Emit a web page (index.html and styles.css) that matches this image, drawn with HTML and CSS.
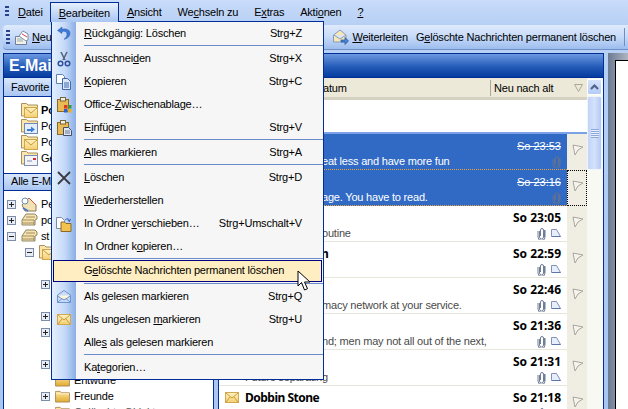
FILE: index.html
```html
<!DOCTYPE html>
<html lang="de">
<head>
<meta charset="utf-8">
<title>Outlook</title>
<link rel="stylesheet" href="styles.css">
</head>
<body>
<svg class="defs" width="0" height="0">
  <defs>
    <linearGradient id="fg" x1="0" y1="0" x2="0" y2="1"><stop offset="0" stop-color="#ffe9a8"/><stop offset="1" stop-color="#e2a92c"/></linearGradient>
    <linearGradient id="eg" x1="0" y1="0" x2="0" y2="1"><stop offset="0" stop-color="#fff3c4"/><stop offset="1" stop-color="#f5cf70"/></linearGradient>
    <symbol id="folder" viewBox="0 0 16 14"><path d="M.5 3V1.500h5l1.500 1.500h8.500v10H.5z" fill="url(#fg)" stroke="#a88f5c"/><path d="M1 4h14" stroke="#fff2c4"/></symbol>
    <symbol id="env" viewBox="0 0 14 11"><rect x=".5" y=".5" width="13" height="10" fill="url(#eg)" stroke="#d2a94e"/><path d="M1 1l6 5 6-5M1 10l4-5M13 10l-4-5" fill="none" stroke="#c89a3c"/></symbol>
    <symbol id="folderenv" viewBox="0 0 17 16"><path d="M.5 3V1.500h5l1.500 1.500h9.500v11H.5z" fill="#fbe6ae" stroke="#a88f5c"/><rect x="3.500" y="5.500" width="13" height="10" fill="url(#eg)" stroke="#cfa64c"/><path d="M4 6l6 5 6-5" fill="none" stroke="#c89a3c"/></symbol>
    <symbol id="clip" viewBox="0 0 9 13"><path d="M2.500 4v6a2 2 0 0 0 4 0V3a1.500 1.500 0 0 0-3 0v6M7.500 3v7M1 4v6a3.500 3.500 0 0 0 7 0V3" fill="none" stroke="currentColor"/></symbol>
    <symbol id="note" viewBox="0 0 10 8"><path d="M.5 7.500V.5h5l4 7z" fill="#e8eefb" stroke="#7f92b8"/><path d="M1 7.500h8.500" stroke="#5d74a8"/></symbol>
    <symbol id="flag" viewBox="0 0 12 14"><path d="M3 12L1 2l10 2-5 3z" fill="#f6f4ec" stroke="#a8a8a0"/></symbol>
    <symbol id="drive" viewBox="0 0 17 16"><path d="M1 8l4-6h9l2 2v3l-2 1v5H1z" fill="#f5e2b0" stroke="#8f8664"/><path d="M1 8h12v5M1 11h12M5 5h9" fill="none" stroke="#a08f5c"/></symbol>
    <symbol id="plus" viewBox="0 0 9 9"><rect x=".5" y=".5" width="8" height="8" fill="#e8ecf5" stroke="#7f8ba8"/><path d="M2 4.500h5M4.500 2v5" stroke="#222"/></symbol>
    <symbol id="minus" viewBox="0 0 9 9"><rect x=".5" y=".5" width="8" height="8" fill="#e8ecf5" stroke="#7f8ba8"/><path d="M2 4.500h5" stroke="#222"/></symbol>
    <symbol id="clipb" viewBox="0 0 16 16"><rect x="1.500" y="2.500" width="11" height="12" fill="#e9bb52" stroke="#8a6a2a"/><rect x="4.500" y=".5" width="5" height="3.500" fill="#f3efe2" stroke="#77653b"/></symbol>
  </defs>
</svg>

<div class="app">
  <nav class="menubar">
    <span class="grip"></span>
    <span class="mi"><u>D</u>atei</span>
    <span class="mi mi-open"><u>B</u>earbeiten</span>
    <span class="mi"><u>A</u>nsicht</span>
    <span class="mi">We<u>c</u>hseln zu</span>
    <span class="mi">E<u>x</u>tras</span>
    <span class="mi">Akti<u>o</u>nen</span>
    <span class="mi"><u>?</u></span>
  </nav>

  <div class="toolbar">
    <span class="grip grip-tb"></span>
    <svg class="tb-ico" width="17" height="17" viewBox="0 0 17 17"><path d="M1.500 7.500h11v8h-11z" fill="#f4f2e8" stroke="#6d7f9d"/><path d="M5 7l4-5 5 3v6l-2 1z" fill="#fff" stroke="#7b8cab"/><path d="M8 5l5 3" stroke="#d44"/><path d="M3 10h6M3 12h6" stroke="#9aa"/></svg>
    <span class="tb-t tb-neu"><u>N</u>eu</span>
    <span class="tb-spacer"></span>
    <span class="tb-frag"></span>
    <svg class="tb-ico" width="16" height="16" viewBox="0 0 16 16"><path d="M.5 6L7 1l6 5v7H.5z" fill="#f6e7b4" stroke="#8a9bb8"/><path d="M1 6l6 4 6-4" fill="#dbe7f8" stroke="#8a9bb8"/><path d="M8 11h4V8.500l3.500 3.500-3.500 3.500V13H8z" fill="#4a86d8" stroke="#24509a" stroke-width=".7"/></svg>
    <span class="tb-t tb-wl"><u>W</u>eiterleiten</span>
    <span class="tb-t tb-del">G<u>e</u>löschte Nachrichten permanent löschen</span>
    <span class="tb-sep"></span>
  </div>

  <div class="panes">
    <aside class="nav">
      <h2 class="pane-title">E-Mai</h2>
      <div class="nav-head">Favorite</div>
      <ul class="fav">
        <li class="fav-row fav-b"><svg class="fav-ico"><use href="#folderenv"/></svg>Po</li>
        <li class="fav-row"><svg class="fav-ico" viewBox="0 0 17 16"><path d="M.5 3V1.500h5l1.500 1.500h9.500v11H.5z" fill="#fbe6ae" stroke="#a88f5c"/><rect x="3.500" y="5.500" width="13" height="10" fill="#e4edfb" stroke="#6e8ab8"/><path d="M6 11h4V8.500l4 3-4 3V13H6z" fill="#3d7cd4"/></svg>Po</li>
        <li class="fav-row"><svg class="fav-ico"><use href="#folderenv"/></svg>Po</li>
        <li class="fav-row"><svg class="fav-ico" viewBox="0 0 17 16"><path d="M.5 3V1.500h5l1.500 1.500h9.500v11H.5z" fill="#fbe6ae" stroke="#a88f5c"/><rect x="3.500" y="5.500" width="13" height="10" fill="#f4f4f8" stroke="#7d8db0"/><path d="M6 11h5" stroke="#7d8db0"/><path d="M12 8h3v2h-3z" fill="#d03030"/></svg>Ge</li>
      </ul>
      <div class="nav-head nav-head-all">Alle E-Ma</div>
      <ul class="tree">
        <li class="t t0"><svg class="box"><use href="#plus"/></svg><svg class="t-ico" viewBox="0 0 17 16"><path d="M1 9l7-7 7 7v6H4z" fill="#f3e2b6" stroke="#8a7a55"/><path d="M8 2l7 7" stroke="#d05030"/><circle cx="4" cy="5" r="3" fill="#fff" stroke="#7088b8"/><path d="M2 12l5 3" stroke="#4a78c8" stroke-width="2"/></svg>Pe</li>
        <li class="t t0"><svg class="box"><use href="#plus"/></svg><svg class="t-ico"><use href="#drive"/></svg>po</li>
        <li class="t t0"><svg class="box"><use href="#minus"/></svg><svg class="t-ico"><use href="#drive"/></svg>st</li>
        <li class="t t1"><svg class="box"><use href="#minus"/></svg><svg class="t-ico"><use href="#folderenv"/></svg></li>
        <li class="t t2"></li>
        <li class="t t2"><svg class="box"><use href="#plus"/></svg></li>
        <li class="t t2"></li>
        <li class="t t2"><svg class="box"><use href="#plus"/></svg></li>
        <li class="t t2"><svg class="box"><use href="#plus"/></svg></li>
        <li class="t t2"></li>
        <li class="t t2"><svg class="box"><use href="#plus"/></svg></li>
        <li class="t t2"><span class="box-none"></span><svg class="t-fold"><use href="#folder"/></svg>Entwürfe</li>
        <li class="t t2"><svg class="box"><use href="#plus"/></svg><svg class="t-fold"><use href="#folder"/></svg>Freunde</li>
        <li class="t t2 t-muted"><span class="box-none"></span><svg class="t-fold"><use href="#folder"/></svg>Gelöschte Objekte</li>
      </ul>
    </aside>

    <main class="list-pane">
      <div class="list-col">
        <div class="colhead">
          <span class="ch-sort">atum</span>
          <span class="ch-order">Neu nach alt</span>
          <svg class="ch-tri" width="9" height="8" viewBox="0 0 9 8"><path d="M.5.500h8L4.500 7.500z" fill="#ece9d8" stroke="#aca899"/></svg>
        </div>
        <div class="rows">
          <div class="spacer"></div>
          <div class="grouprule"></div>
          <article class="row sel">
            <div class="cell">
              <div class="l1"><time class="tm">So 23:53</time></div>
              <div class="l2"><span class="prev">eat less and have more fun</span><svg class="clip"><use href="#clip"/></svg></div>
            </div>
            <div class="fl"><svg class="flag"><use href="#flag"/></svg></div>
          </article>
          <article class="row sel focus">
            <div class="cell">
              <div class="l1"><time class="tm">So 23:16</time></div>
              <div class="l2"><span class="prev">age. You have to read.</span><svg class="clip"><use href="#clip"/></svg></div>
            </div>
            <div class="fl"><svg class="flag"><use href="#flag"/></svg></div>
          </article>
          <article class="row">
            <div class="cell">
              <div class="l1"><time class="tm">So 23:05</time></div>
              <div class="l2"><span class="prev">outine</span><svg class="clip"><use href="#clip"/></svg><svg class="note"><use href="#note"/></svg></div>
            </div>
            <div class="fl"><svg class="flag"><use href="#flag"/></svg></div>
          </article>
          <article class="row">
            <div class="cell">
              <div class="l1"><span class="from from-frag">n</span><time class="tm">So 22:59</time></div>
              <div class="l2"><span class="prev"></span><svg class="clip"><use href="#clip"/></svg><svg class="note"><use href="#note"/></svg></div>
            </div>
            <div class="fl"><svg class="flag"><use href="#flag"/></svg></div>
          </article>
          <article class="row">
            <div class="cell">
              <div class="l1"><span class="from from-frag">:</span><time class="tm">So 22:46</time></div>
              <div class="l2"><span class="prev">macy network at your service.</span><svg class="clip"><use href="#clip"/></svg><svg class="note"><use href="#note"/></svg></div>
            </div>
            <div class="fl"><svg class="flag"><use href="#flag"/></svg></div>
          </article>
          <article class="row">
            <div class="cell">
              <div class="l1"><time class="tm">So 21:36</time></div>
              <div class="l2"><span class="prev">nd; men may not all out of the next,</span><svg class="clip"><use href="#clip"/></svg><svg class="note"><use href="#note"/></svg></div>
            </div>
            <div class="fl"><svg class="flag"><use href="#flag"/></svg></div>
          </article>
          <article class="row">
            <div class="cell">
              <div class="l1"><time class="tm">So 21:31</time></div>
              <div class="l2"><span class="prev prev-full">Future separating</span><svg class="clip"><use href="#clip"/></svg><svg class="note"><use href="#note"/></svg></div>
            </div>
            <div class="fl"><svg class="flag"><use href="#flag"/></svg></div>
          </article>
          <article class="row">
            <div class="cell">
              <div class="l1"><svg class="row-env"><use href="#env"/></svg><span class="from">Dobbin Stone</span><time class="tm">So 21:18</time></div>
              <div class="l2"><span class="prev"></span><svg class="clip"><use href="#clip"/></svg><svg class="note"><use href="#note"/></svg></div>
            </div>
            <div class="fl"><svg class="flag"><use href="#flag"/></svg></div>
          </article>
        </div>
      </div>
      <div class="sb">
        <div class="sb-btn"><svg width="9" height="6" viewBox="0 0 9 6"><path d="M1 5l3.500-3.500L8 5" fill="none" stroke="#4d6185" stroke-width="2"/></svg></div>
        <div class="sb-thumb"><span class="sb-grip"></span></div>
      </div>
    </main>

    <aside class="side"><div class="side-body"></div></aside>
  </div>
</div>

<div class="dropdown">
  <div class="dd-row"><svg class="dd-ico" viewBox="0 0 16 16"><path d="M6 1L1.500 4.500 6 7.500V5.500c3-.8 5 .5 5 2.800 0 2-1 3.500-3 5 4-.8 6-3 6-6 0-3.500-3.500-5-8-4.200z" fill="#3f79d8" stroke="#2c5aa8" stroke-width=".5"/></svg><span class="dd-t"><u>R</u>ückgängig: Löschen</span><span class="dd-k">Strg+Z</span></div>
  <div class="dd-sep"></div>
  <div class="dd-row"><svg class="dd-ico" viewBox="0 0 16 16"><path d="M5 1l4 8M11 1L7 9" stroke="#59657f" stroke-width="1.600"/><circle cx="4.500" cy="12.500" r="2.300" fill="none" stroke="#2f4f9f" stroke-width="1.500"/><circle cx="11.500" cy="12.500" r="2.300" fill="none" stroke="#2f4f9f" stroke-width="1.500"/></svg><span class="dd-t">Ausschnei<u>d</u>en</span><span class="dd-k">Strg+X</span></div>
  <div class="dd-row"><svg class="dd-ico" viewBox="0 0 16 16"><path d="M.5.500h6l2 2v7h-8z" fill="#fff" stroke="#5f7fb8"/><path d="M6.500 4.500h5l3 3v8h-8z" fill="#dbe8fb" stroke="#3f67ad"/><path d="M8 9h5M8 11h5M8 13h5" stroke="#3f67ad"/></svg><span class="dd-t"><u>K</u>opieren</span><span class="dd-k">Strg+C</span></div>
  <div class="dd-row"><svg class="dd-ico" viewBox="0 0 16 16"><use href="#clipb"/><rect x="8" y="8" width="3.500" height="3.500" fill="#d83a2a"/><rect x="12" y="8" width="3.500" height="3.500" fill="#3a9a3a"/><rect x="8" y="12" width="3.500" height="3.500" fill="#2a5fd0"/><rect x="12" y="12" width="3.500" height="3.500" fill="#e8b020"/></svg><span class="dd-t">Office-<u>Z</u>wischenablage…</span></div>
  <div class="dd-row"><svg class="dd-ico" viewBox="0 0 16 16"><use href="#clipb"/><path d="M7.500 7.500h5l3 3v5h-8z" fill="#dfe5f2" stroke="#44506e"/><path d="M9 11h5M9 13h5" stroke="#6a7896"/></svg><span class="dd-t">E<u>i</u>nfügen</span><span class="dd-k">Strg+V</span></div>
  <div class="dd-sep"></div>
  <div class="dd-row"><span class="dd-noico"></span><span class="dd-t"><u>A</u>lles markieren</span><span class="dd-k">Strg+A</span></div>
  <div class="dd-sep"></div>
  <div class="dd-row"><svg class="dd-ico" viewBox="0 0 16 16"><path d="M2 2l12 12M14 2L2 14" stroke="#3a3a42" stroke-width="1.800"/></svg><span class="dd-t"><u>L</u>öschen</span><span class="dd-k">Strg+D</span></div>
  <div class="dd-row"><span class="dd-noico"></span><span class="dd-t"><u>W</u>iederherstellen</span></div>
  <div class="dd-row"><svg class="dd-ico" viewBox="0 0 16 16"><path d="M.5 1.500h5l3 3v8h-8z" fill="#fff" stroke="#7d8aa5"/><path d="M5 8V6h3.500l1.500 1.500h5v8H5z" fill="#f2c24e" stroke="#8a6a2a"/><path d="M9 4c2-2 4-1.500 4.500 1M14.500 3l-1 2.500-2-1.500" fill="none" stroke="#2f5fb0"/></svg><span class="dd-t">In Ordner <u>v</u>erschieben…</span><span class="dd-k">Strg+Umschalt+V</span></div>
  <div class="dd-row"><span class="dd-noico"></span><span class="dd-t">In Ordner k<u>o</u>pieren…</span></div>
  <div class="dd-sep"></div>
  <div class="dd-row dd-hi"><span class="dd-noico"></span><span class="dd-t">G<u>e</u>löschte Nachrichten permanent löschen</span></div>
  <div class="dd-sep"></div>
  <div class="dd-row"><svg class="dd-ico" viewBox="0 0 16 16"><path d="M1.500 6L8 1.500 14.500 6v7.500h-13z" fill="#c9dcf7" stroke="#6f93cf"/><path d="M3.500 6.500h9v3h-9z" fill="#fff6d8"/><path d="M1.500 7L8 11l6.500-4M1.500 13.500L6 9.500M14.500 13.500L10 9.500" fill="none" stroke="#6f93cf"/></svg><span class="dd-t">Als <u>g</u>elesen markieren</span><span class="dd-k">Strg+Q</span></div>
  <div class="dd-row"><svg class="dd-ico dd-env"><use href="#env"/></svg><span class="dd-t">Als ungelesen <u>m</u>arkieren</span><span class="dd-k">Strg+U</span></div>
  <div class="dd-row"><span class="dd-noico"></span><span class="dd-t">Alle<u>s</u> als gelesen markieren</span></div>
  <div class="dd-sep"></div>
  <div class="dd-row"><span class="dd-noico"></span><span class="dd-t">Ka<u>t</u>egorien…</span></div>
</div>

<svg class="cursor" width="14" height="22" viewBox="0 0 14 22"><path d="M1 1v15l3.500-3.500L7.500 20l3-1.300-3-6.700H13z" fill="#fff" stroke="#000"/></svg>
</body>
</html>
```

FILE: styles.css
```css
* { box-sizing: border-box; }
html, body { margin: 0; padding: 0; height: 100%; overflow: hidden; }
body { font: 11px "Liberation Sans", "DejaVu Sans", sans-serif; letter-spacing: -0.2px; color: #000; background: #a9c6f2; position: relative; }
.defs { position: absolute; }
ul { list-style: none; margin: 0; padding: 0; }
h2 { margin: 0; }

.app { width: 628px; height: 409px; display: flex; flex-direction: column; overflow: hidden; background: linear-gradient(#b9d2f5, #a9c6f2); }

.menubar { height: 25px; flex: none; display: flex; align-items: center; padding: 0 0 1px 5px; background: linear-gradient(#c9dcfa, #b6cff4); }
.grip { width: 4px; height: 12px; flex: none; background: repeating-linear-gradient(#27418a 0 2px, transparent 2px 4px); }
.mi { height: 20px; padding: 0 8px; display: flex; align-items: center; white-space: nowrap; }
.mi:nth-child(2) { margin-left: 1px; }
.mi-open { position: relative; z-index: 6; margin-left: -1px; background: linear-gradient(#e6f0fe, #a9c6f2); border: 1px solid #002d96; border-bottom: 0; }

.toolbar { height: 25px; flex: none; margin-left: 3px; display: flex; align-items: center; padding-left: 3px; border-radius: 4px 0 0 4px; border-bottom: 1px solid #6f8fc8; background: linear-gradient(#dfeafc, #c6daf8 50%, #9dbdee); }
.grip-tb { height: 15px; }
.tb-ico { flex: none; margin-left: 4px; }
.tb-t { white-space: nowrap; }
.tb-neu { margin-left: 1px; }
.tb-spacer { flex: 1; }
.tb-frag { width: 3px; height: 7px; flex: none; margin-right: 5px; background: #8fa9d8; }
.tb-wl { margin-left: 3px; }
.tb-del { margin-left: 8px; }
.tb-sep { width: 1px; height: 18px; margin: 0 3px 0 8px; background: #6f8fc8; flex: none; }

.panes { flex: 1; min-height: 0; display: flex; padding: 3px 0 0 3px; overflow: hidden; }

.nav { width: 211px; flex: none; margin-right: 4px; border: 1px solid #002d96; border-top: 0; border-bottom: 0; background: #fff; position: relative; }
.pane-title { height: 25px; width: 601px; margin-left: -1px; position: relative; z-index: 1; padding: 0 0 0 5px; font-size: 16px; letter-spacing: 0; line-height: 23px; font-weight: 700; color: #fff; background: linear-gradient(#6b98e0, #255cb8 55%, #063c9e); border: 1px solid #002d96; }
.nav-head { height: 19px; padding-left: 7px; line-height: 18px; white-space: nowrap; background: linear-gradient(#d8e7fb, #a9c6f2); border-bottom: 1px solid #002d96; }
.nav-head-all { height: 18px; line-height: 15px; border-top: 1px solid #002d96; }
.fav { height: 76px; padding-top: 5px; }
.fav-row { height: 16px; display: flex; align-items: center; white-space: nowrap; padding-left: 17px; }
.fav-b { font-weight: 700; }
.fav-ico { width: 17px; height: 16px; margin-right: 3px; flex: none; }
.tree { padding-top: 5px; }
.t { height: 16px; display: flex; align-items: center; white-space: nowrap; }
.t0 { padding-left: 3px; }
.t1 { padding-left: 21px; }
.t2 { padding-left: 37px; }
.t-muted { color: #555; }
.box { width: 9px; height: 9px; flex: none; margin-right: 5px; }
.box-none { width: 9px; flex: none; margin-right: 5px; }
.t-ico { width: 17px; height: 16px; margin-right: 3px; flex: none; }
.t-fold { width: 15px; height: 13px; margin-right: 4px; flex: none; }

.list-pane { width: 386px; flex: none; margin-top: 25px; display: flex; border-right: 1px solid #002d96; border-left: 1px solid #002d96; background: #fff; }
.list-col { width: 368px; flex: none; }
.colhead { height: 22px; display: flex; align-items: center; background: #ece9d8; border-bottom: 3px solid #d6d2c2; }
.ch-sort { width: 271px; padding-left: 104px; white-space: nowrap; }
.ch-order { flex: 1; padding-left: 3px; height: 16px; line-height: 16px; border-left: 1px solid #aca899; white-space: nowrap; }
.ch-tri { margin-right: 4px; flex: none; }
.rows { overflow: hidden; }
.spacer { height: 32px; background: #fff; }
.grouprule { height: 2px; background: #7ba2e7; }

.row { height: 36px; display: flex; }
.cell { flex: 1; min-width: 0; border-bottom: 1px solid #e8e5da; padding: 4px 6px 0 6px; }
.fl { width: 20px; flex: none; background: #f0ede3; padding: 9px 0 0 5px; }
.flag { width: 12px; height: 14px; display: block; }
.l1 { height: 15px; display: flex; align-items: center; }
.l2 { height: 16px; display: flex; align-items: center; color: #4a4a4a; }
.from { padding-left: 6px; font: 700 12px "Noto Sans", sans-serif; letter-spacing: -0.5px; white-space: nowrap; }
.from-frag { padding-left: 96px; }
.row-env { width: 14px; height: 11px; flex: none; }
.tm { margin-left: auto; font: 700 12px "Noto Sans", sans-serif; letter-spacing: 0; white-space: nowrap; }
.prev { flex: 1; min-width: 0; white-space: nowrap; overflow: hidden; padding-left: 97px; }
.prev-full { padding-left: 20px; }
.clip { width: 9px; height: 13px; flex: none; color: #6f7e96; margin-left: 5px; }
.note { width: 10px; height: 8px; flex: none; margin-left: 5px; }
.sel .cell { background: #316ac5; color: #fff; border-bottom: 1px dotted #e8a23c; }
.sel .l2 { color: #fff; }
.sel .tm { font: 400 11px "Liberation Sans", sans-serif; text-decoration: line-through; }
.sel .clip { color: #5c7194; }
.focus .fl { outline: 1px dotted #000; outline-offset: -1px; }

.sb { width: 16px; flex: none; background: #f9f9f4; padding: 1px 1px 0 0; }
.sb-btn { height: 16px; border: 1px solid #fff; border-radius: 2px; background: linear-gradient(#d5e2fb, #b4ccf6); display: flex; align-items: center; justify-content: center; }
.sb-thumb { height: 74px; margin-top: 1px; border: 1px solid #eef3fd; border-radius: 2px; background: linear-gradient(90deg, #c2d4f8, #d4e1fb 50%, #b4caf5); display: flex; align-items: center; justify-content: center; }
.sb-grip { width: 8px; height: 9px; background: repeating-linear-gradient(#8fa9dc 0 1px, #e7eefc 1px 2px); }

.side { flex: none; width: 20px; margin-left: 4px; padding: 7px 0 0 7px; background: linear-gradient(90deg, #6c7a92, #aeb5c2); }
.side-body { width: 13px; height: 100%; background: #fff; border-top: 1px solid #000; border-left: 1px solid #000; }

.dropdown { position: absolute; left: 51px; top: 21px; width: 273px; height: 359px; border: 1px solid #002d96; background: linear-gradient(90deg, #e3efff 0, #c4d9f8 13px, #8aaee5 24px, #f6f6f6 24px); z-index: 5; }
.dd-row { height: 23px; display: flex; align-items: center; white-space: nowrap; }
.dd-t, .dd-k { margin-bottom: 2px; }
.dd-ico { width: 16px; height: 16px; margin-left: 4px; margin-right: 12px; flex: none; }
.dd-env { height: 11px; width: 14px; margin-left: 5px; margin-right: 13px; }
.dd-noico { width: 32px; flex: none; }
.dd-k { margin-left: auto; padding-right: 21px; }
.dd-sep { height: 2px; margin-left: 32px; background: #6a8ccb; border-bottom: 1px solid #f6f6f6; }
.dd-hi { margin: 0 1px; height: 22px; background: #ffeec2; outline: 1px solid #000080; outline-offset: -1px; }
.dd-hi + .dd-sep { margin-top: 1px; }
.dd-hi .dd-noico { width: 31px; }

.cursor { position: absolute; left: 297px; top: 270px; z-index: 6; }
```
